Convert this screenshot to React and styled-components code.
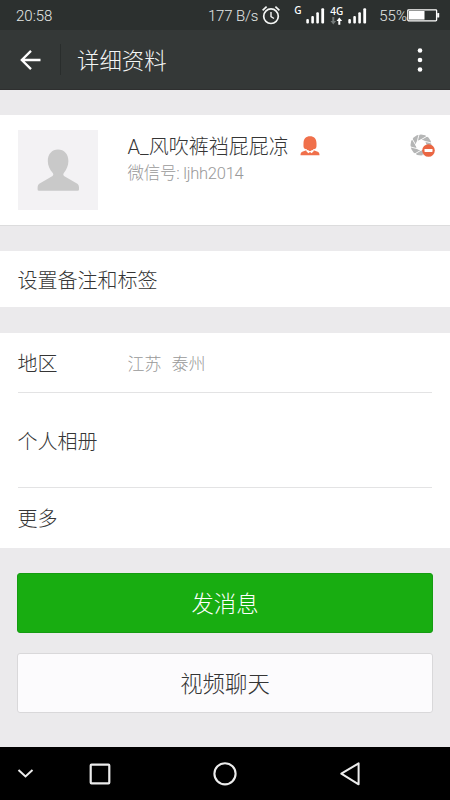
import styled, {createGlobalStyle} from "styled-components";

const App = () => {
    return (
        <>
            <GlobalStyle/>
            <Screen>
                <StatusBar>
                    <Clock>20:58</Clock>
                    <Speed>177 B/s</Speed>
                    <AlarmIcon/>
                    <SimOne>G</SimOne>
                    <Signal/>
                    <SimTwo>
                        <span>4G</span>
                        <DataArrows/>
                    </SimTwo>
                    <Signal/>
                    <Percent>55%</Percent>
                    <BatteryIcon/>
                </StatusBar>

                <Toolbar>
                    <BackIcon/>
                    <Separator/>
                    <Title>详细资料</Title>
                    <MoreIcon/>
                </Toolbar>

                <Profile>
                    <Avatar/>
                    <Info>
                        <Name>
                            A_风吹裤裆屁屁凉
                            <GenderIcon/>
                        </Name>
                        <Account>微信号: ljhh2014</Account>
                    </Info>
                    <MomentsIcon/>
                </Profile>

                <Section>
                    <Row $height={56}>
                        <Label>设置备注和标签</Label>
                    </Row>
                </Section>

                <Section>
                    <Row $height={60} $divider>
                        <Label>地区</Label>
                        <Value>江苏&nbsp; 泰州</Value>
                    </Row>
                    <Row $height={95} $divider>
                        <Label>个人相册</Label>
                    </Row>
                    <Row $height={59}>
                        <Label>更多</Label>
                    </Row>
                </Section>

                <Actions>
                    <Button $primary>发消息</Button>
                    <Button>视频聊天</Button>
                </Actions>

                <NavBar>
                    <svg width="450" height="53" fill="none" stroke="#ececec" strokeWidth="2">
                        <path d="M18.5 23l7 6.5 7-6.5"/>
                        <rect x="90.7" y="17.7" width="18.6" height="18.6" rx="0.8" strokeWidth="2.2"/>
                        <circle cx="225" cy="26.8" r="10.6" strokeWidth="2.1"/>
                        <path d="M341.3 26.7l17.3-10.4v21z" strokeLinejoin="round"/>
                    </svg>
                </NavBar>
            </Screen>
        </>
    );
}

const AlarmIcon = () => (
    <svg width="20" height="21" viewBox="0 0 20 21" fill="none" stroke="#f4f6f5" strokeWidth="1.7">
        <circle cx="10" cy="11.2" r="7.3"/>
        <path d="M10 6.900v4.800l3 1.800" strokeWidth="1.4"/>
        <path d="M1.600 5.300l4-3.700M18.400 5.300l-4-3.700"/>
    </svg>
)

const Signal = () => (
    <svg width="19" height="16" viewBox="0 0 19 16" fill="#fff">
        <rect x="0.3" y="11" width="2.6" height="4.5" rx="1"/>
        <rect x="5.3" y="8" width="2.6" height="7.5" rx="1"/>
        <rect x="10.3" y="4.3" width="2.6" height="11.2" rx="1"/>
        <rect x="15.3" y="0.3" width="2.8" height="15.2" rx="1"/>
    </svg>
)

const DataArrows = () => (
    <svg width="13" height="8" viewBox="0 0 13 8">
        <path d="M2.3 0h2v4h1.8L3.3 7.4.5 4h1.8z" fill="#737978"/>
        <path d="M8.3 7.7h2V4h1.9L9.3.4 6.5 4h1.8z" fill="#fff"/>
    </svg>
)

const BatteryIcon = () => (
    <svg width="33" height="13" viewBox="0 0 33 13">
        <rect x="0.8" y="0.8" width="28.8" height="11" rx="0.8" fill="none" stroke="#fff" strokeWidth="1.3"/>
        <rect x="2" y="2" width="15.5" height="8.6" fill="#fff"/>
        <rect x="30.2" y="4" width="2" height="4.6" rx="0.6" fill="#fff"/>
    </svg>
)

const BackIcon = () => (
    <svg width="22" height="22" viewBox="0 0 22 22" fill="none" stroke="#fff" strokeWidth="2.3">
        <path d="M21.500 11H2.800M12 1.900L2.800 11l9.200 9.100"/>
    </svg>
)

const MoreIcon = () => (
    <svg width="6" height="24" viewBox="0 0 6 24" fill="#fff">
        <circle cx="3" cy="2.5" r="2.3"/>
        <circle cx="3" cy="12" r="2.3"/>
        <circle cx="3" cy="21.5" r="2.3"/>
    </svg>
)

const Avatar = () => (
    <svg width="80" height="80" viewBox="0 0 80 80">
        <rect width="80" height="80" fill="#f3f2f4"/>
        <path
            d="M40 19.5c6.200 0 10.400 4.700 10.400 11.500 0 5-2 8.600-4.600 12-.8 1.200-.7 2.400.6 3.200l12.100 7c1.800 1.100 2.500 2.300 2.500 4.200v2q0 1.400-1.400 1.400H21q-1.400 0-1.400-1.400v-2c0-1.900.7-3.100 2.500-4.200l12-7c1.400-.8 1.500-2 .7-3.200-3-3.400-5-7-5-12 0-6.800 4.200-11.500 10.200-11.500z"
            fill="#c9c9c9"
        />
    </svg>
)

const GenderIcon = () => (
    <svg width="20" height="20" viewBox="0 0 20 20" fill="#f0704b">
        <path d="M10 .3c4 0 6.500 2.600 6.500 7 0 2.500.2 4.200-.8 5.200-.6.600-1.600.700-2.700.700V15H7v-1.800c-1.100 0-2.100-.1-2.700-.7-1-1-.8-2.700-.8-5.200 0-4.400 2.500-7 6.500-7z"/>
        <path d="M6.300 14.200L10 15.500l3.700-1.300 4 1.500c1.300.5 1.800 1.500 1.800 3.600H.5c0-2.100.5-3.100 1.800-3.600z"/>
        <path d="M5.700 14.500l2.600 2.800L10 16l1.700 1.300 2.600-2.800-2.100-.6-2.200 1-2.200-1z" fill="#fff"/>
        <path d="M7.800 13.200h4.400L10 15.300z"/>
    </svg>
)

// camera shutter with a "blocked" badge
const MomentsIcon = () => (
    <svg width="26" height="24" viewBox="0 0 26 24">
        <circle cx="11" cy="11" r="7.9" fill="none" stroke="#b5b6b6" strokeWidth="5.2"/>
        <g stroke="#fff" strokeWidth="0.9">
            {[0, 45, 90, 135, 180, 225, 270, 315].map(angle => (
                <path key={angle} d="M6.2 11.5L9.3-.5" transform={`rotate(${angle} 11 11)`}/>
            ))}
        </g>
        <circle cx="18.5" cy="16.5" r="6.3" fill="#ea6643"/>
        <rect x="14.5" y="15" width="8" height="3" rx="0.4" fill="#fff"/>
    </svg>
)

const GlobalStyle = createGlobalStyle`
  body {
    margin: 0;
    background: #ebeaec;
  }
`

const Screen = styled.div`
  display: flex;
  flex-direction: column;
  width: 450px;
  height: 800px;
  overflow: hidden;
  background: #ebeaec;
  color: #353535;
  font-family: Roboto, "Noto Sans CJK SC", sans-serif;
  font-weight: 300;

  svg {
    flex-shrink: 0;
  }
`

const StatusBar = styled.div`
  display: flex;
  align-items: center;
  box-sizing: border-box;
  height: 30px;
  padding: 1px 10px 0 16px;
  background: #2c302f;
  color: #e5e8e7;
  font-size: 15px;
  line-height: 30px;
`

const Clock = styled.span`
  flex: 1;
`

const Speed = styled.span`
  margin-right: 3px;
  letter-spacing: -0.15px;
`

const SimOne = styled.span`
  align-self: flex-start;
  width: 12px;
  margin-left: 13px;
  color: #fff;
  font: 500 10px/18px "Noto Sans", sans-serif;
`

const SimTwo = styled.div`
  display: flex;
  flex-direction: column;
  width: 14px;
  margin: 0 4px 0 5px;
  color: #fff;
  font: 500 10px/9px "Noto Sans", sans-serif;

  svg {
    margin-top: 1px;
  }
`

const Percent = styled.span`
  margin-left: 12px;
`

const Toolbar = styled.div`
  display: flex;
  align-items: center;
  box-sizing: border-box;
  height: 60px;
  margin-bottom: 25px;
  padding: 0 27px 0 19px;
  background: #343837;
  border-bottom: 1px solid #2e2f2f;
`

const Separator = styled.div`
  width: 1px;
  height: 31px;
  margin: 0 16px 0 19px;
  background: #292d2c;
`

const Title = styled.h1`
  flex: 1;
  margin: 0;
  padding-top: 2px;
  color: #f4f6f5;
  font-size: 22.4px;
  font-weight: 300;
  line-height: 32px;
`

const Profile = styled.div`
  display: flex;
  align-items: flex-start;
  box-sizing: border-box;
  height: 111px;
  margin-bottom: 25px;
  padding: 15px 14px 0 17.5px;
  background: #fff;
  border-bottom: 1px solid #dcdcdd;

  > svg:last-child {
    margin-top: 4px;
  }
`

const Info = styled.div`
  flex: 1;
  margin: 3px 0 0 30px;
`

const Name = styled.div`
  display: flex;
  align-items: center;
  gap: 12px;
  font-size: 20px;
  line-height: 29px;

  svg {
    margin: -3px 0 0 -1px;
  }
`

const Account = styled.div`
  color: #999;
  font-size: 16.5px;
  letter-spacing: -0.25px;
  line-height: 24px;
`

const Section = styled.div`
  margin-bottom: 26px;
  padding: 0 18px;
  background: #fff;

  & + & {
    margin-bottom: 25px;
    padding-bottom: 1px;
  }
`

const Row = styled.div`
  display: flex;
  align-items: center;
  box-sizing: border-box;
  height: ${({$height}) => $height}px;
  border-bottom: ${({$divider}) => $divider ? "1px solid #e3e3e4" : "none"};
`

const Label = styled.span`
  width: 110px;
  margin-left: -0.5px;
  font-size: 20px;
  white-space: nowrap;
`

const Value = styled.span`
  color: #999;
  font-size: 17px;
  word-spacing: 0.8px;
`

const Actions = styled.div`
  display: flex;
  flex: 1;
  flex-direction: column;
  gap: 20px;
  padding: 0 17px;
`

const Button = styled.button`
  height: 60px;
  padding: 0 0 2px;
  border: 1px solid ${({$primary}) => $primary ? "#159c12" : "#d9d8da"};
  border-radius: 3px;
  background: ${({$primary}) => $primary ? "#18ad11" : "#fcfbfd"};
  color: ${({$primary}) => $primary ? "#fff" : "#353535"};
  font-family: inherit;
  font-size: 22.4px;
  font-weight: 300;
`

const NavBar = styled.div`
  height: 53px;
  background: #000;
`

export default App;
